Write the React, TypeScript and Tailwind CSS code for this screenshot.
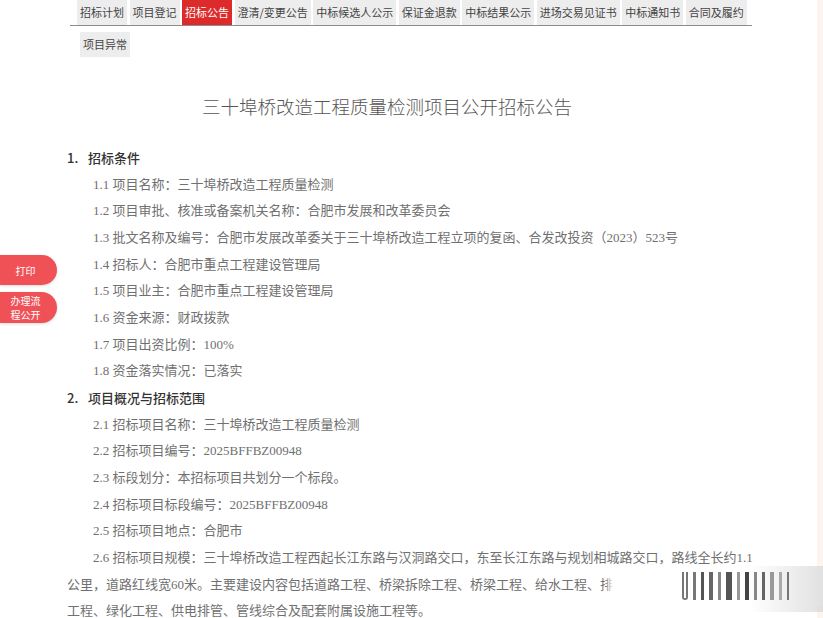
import React from "react";

const tabs = [
  "招标计划",
  "项目登记",
  "招标公告",
  "澄清/变更公告",
  "中标候选人公示",
  "保证金退款",
  "中标结果公示",
  "进场交易见证书",
  "中标通知书",
  "合同及履约",
];

const sans = { fontFamily: "'Noto Sans CJK SC', 'Noto Sans', sans-serif" };
const body = { fontFamily: "'Liberation Serif', 'Noto Sans CJK SC', serif" };

function Item({ children }: { children: React.ReactNode }) {
  return (
    <p className="indent-[26px] text-[13px] leading-[26.65px] text-[#707070] whitespace-nowrap" style={body}>
      {children}
    </p>
  );
}

function Heading({ num, text }: { num: string; text: string }) {
  return (
    <div className="flex items-center text-[13px] leading-[26.65px] text-[#333] font-medium" style={sans}>
      <span className="w-[21px]">{num}</span>
      <span>{text}</span>
    </div>
  );
}

export default function App() {
  return (
    <div className="relative w-[823px] h-[618px] overflow-hidden bg-white" style={sans}>
      {/* right edge tint */}
      <div className="absolute right-0 top-0 h-full w-[6px] bg-[#fcf4ee]" />

      {/* tabs */}
      <div className="flex gap-[2.5px] pl-[77px]">
        {tabs.map((t) => (
          <div
            key={t}
            className={
              t === "招标公告"
                ? "h-[25px] px-[3px] flex items-center text-[11px] bg-[#dd2a2a] text-white"
                : "h-[25px] px-[3px] flex items-center text-[11px] bg-[#ededed] text-[#444]"
            }
          >
            {t}
          </div>
        ))}
      </div>
      <div className="ml-[70px] w-[682px] h-px bg-[#8c8c8c]" />
      <div className="mt-[6px] pl-[80px] flex">
        <div className="h-[25px] px-[3px] flex items-center text-[11px] bg-[#ededed] text-[#444]">项目异常</div>
      </div>

      {/* title */}
      <h1 className="mt-[36px] pl-[202px] text-[18.5px] leading-[26px] text-[#555] font-light whitespace-nowrap">
        三十埠桥改造工程质量检测项目公开招标公告
      </h1>

      {/* content */}
      <div className="mt-[26px] pl-[67px] w-[760px]">
        <Heading num="1." text="招标条件" />
        <Item>1.1 项目名称：三十埠桥改造工程质量检测</Item>
        <Item>1.2 项目审批、核准或备案机关名称：合肥市发展和改革委员会</Item>
        <Item>1.3 批文名称及编号：合肥市发展改革委关于三十埠桥改造工程立项的复函、合发改投资（2023）523号</Item>
        <Item>1.4 招标人：合肥市重点工程建设管理局</Item>
        <Item>1.5 项目业主：合肥市重点工程建设管理局</Item>
        <Item>1.6 资金来源：财政拨款</Item>
        <Item>1.7 项目出资比例：100%</Item>
        <Item>1.8 资金落实情况：已落实</Item>
        <Heading num="2." text="项目概况与招标范围" />
        <Item>2.1 招标项目名称：三十埠桥改造工程质量检测</Item>
        <Item>2.2 招标项目编号：2025BFFBZ00948</Item>
        <Item>2.3 标段划分：本招标项目共划分一个标段。</Item>
        <Item>2.4 招标项目标段编号：2025BFFBZ00948</Item>
        <Item>2.5 招标项目地点：合肥市</Item>
        <Item>
          2.6 招标项目规模：三十埠桥改造工程西起长江东路与汉洞路交口，东至长江东路与规划相城路交口，路线全长约1.1
          <br />
          公里，道路红线宽60米。主要建设内容包括道路工程、桥梁拆除工程、桥梁工程、给水工程、排水工程、照明工程、电力
          <br />
          工程、绿化工程、供电排管、管线综合及配套附属设施工程等。
        </Item>
      </div>

      {/* floating buttons */}
      <div className="absolute left-0 top-[255px] flex flex-col gap-[7px]">
        <div className="w-[57px] h-[30px] rounded-r-full rounded-l-[12px] bg-[#ef5157] text-white text-[10px] flex items-center justify-center pr-[6px] shadow-[0_1px_3px_rgba(0,0,0,0.15)]">
          打印
        </div>
        <div className="w-[57px] h-[31px] rounded-r-full rounded-l-[12px] bg-[#ef5157] text-white text-[10px] leading-[14px] flex flex-col items-center justify-center pr-[6px] shadow-[0_1px_3px_rgba(0,0,0,0.15)]">
          <span>办理流</span>
          <span>程公开</span>
        </div>
      </div>

      {/* watermark overlay */}
      <div className="absolute left-[605px] top-[567px] w-[218px] h-[39px] bg-gradient-to-r from-white/0 via-white to-white to-[8%] via-[4%]" />
      <div className="absolute left-[750px] top-[566px] w-[73px] h-[46px] bg-gradient-to-r from-white/0 to-[#d4d4d4]/70" />
      <div className="absolute left-[682px] top-[572px] flex items-stretch gap-[5px] h-[28px]">
        <div className="w-[6px] border-2 border-[#555] border-t-0 rounded-b-[3px] opacity-80" />
        <div className="w-[3px] bg-[#777]" />
        <div className="w-[3px] bg-[#555]" />
        <div className="w-[4px] bg-[#666]" />
        <div className="w-[3px] bg-[#888]" />
        <div className="w-[6px] bg-[#555]" />
        <div className="w-[3px] bg-[#999]" />
        <div className="w-[4px] bg-[#444]" />
        <div className="w-[3px] bg-[#888]" />
        <div className="w-[3px] bg-[#666]" />
        <div className="w-[4px] bg-[#999]" />
        <div className="w-[3px] bg-[#aaa]" />
        <div className="w-[2px] bg-[#777]" />
      </div>
    </div>
  );
}
